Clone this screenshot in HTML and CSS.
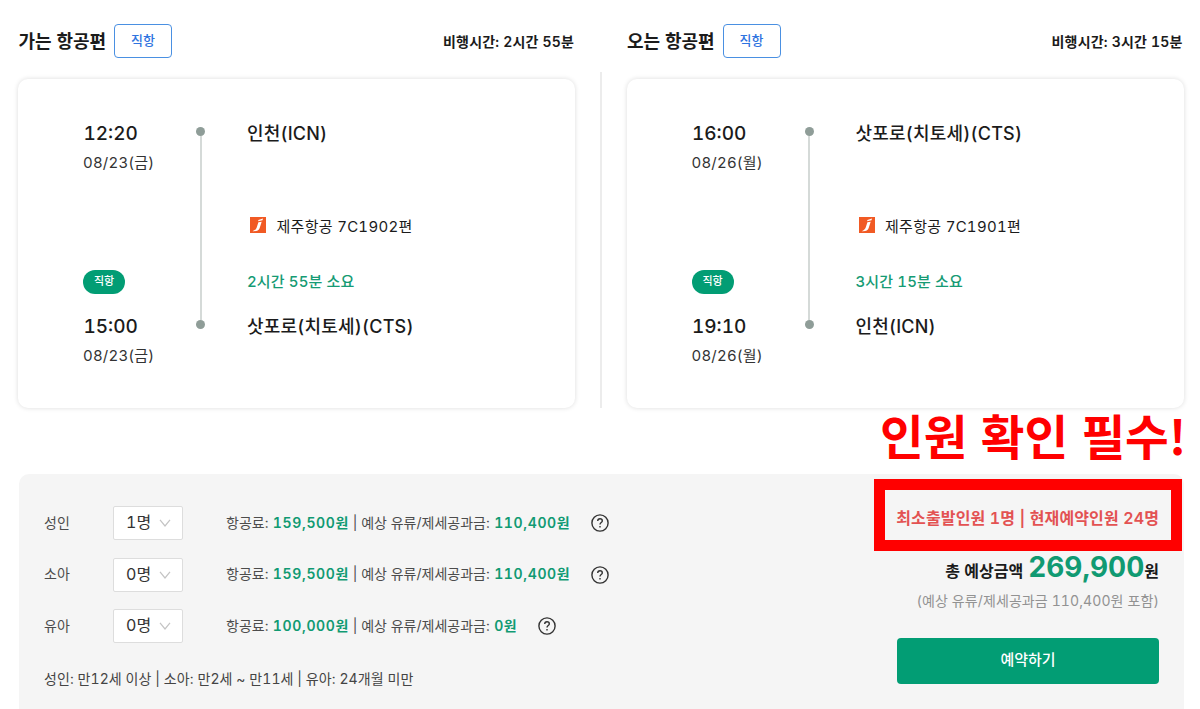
FILE: index.html
```
<!DOCTYPE html>
<html lang="ko">
<head>
<meta charset="utf-8">
<title>항공편 예약</title>
<link rel="stylesheet" href="styles.css">
</head>
<body>
<main class="page">
  <section class="flights">
    <article class="flight">
      <header class="flight-head">
        <h2 class="flight-title">가는 항공편</h2>
        <span class="tag">직항</span>
        <span class="duration">비행시간: 2시간 55분</span>
      </header>
      <div class="card">
        <div class="times">
          <div class="time">12:20</div>
          <div class="date">08/23(금)</div>
          <span class="pill">직항</span>
          <div class="time">15:00</div>
          <div class="date">08/23(금)</div>
        </div>
        <div class="track"><i class="dot"></i><i class="line"></i><i class="dot"></i></div>
        <div class="places">
          <div class="place">인천(ICN)</div>
          <div class="airline">
            <svg class="logo" viewBox="0 0 16 16"><rect width="16" height="16" fill="#f15a24"/><path d="M8.4 2.9 13 1.6 12.5 3.3 8.1 4.3ZM8.4 5.2 11.7 4.8 9.6 11.2C8.8 13.5 6.8 14.5 2.6 14.2 5 13.2 6.2 12.1 6.8 10.2Z" fill="#fff"/></svg>
            <span>제주항공 7C1902편</span>
          </div>
          <div class="elapsed">2시간 55분 소요</div>
          <div class="place">삿포로(치토세)(CTS)</div>
        </div>
      </div>
    </article>
    <div class="divider"></div>
    <article class="flight">
      <header class="flight-head">
        <h2 class="flight-title">오는 항공편</h2>
        <span class="tag">직항</span>
        <span class="duration">비행시간: 3시간 15분</span>
      </header>
      <div class="card">
        <div class="times">
          <div class="time">16:00</div>
          <div class="date">08/26(월)</div>
          <span class="pill">직항</span>
          <div class="time">19:10</div>
          <div class="date">08/26(월)</div>
        </div>
        <div class="track"><i class="dot"></i><i class="line"></i><i class="dot"></i></div>
        <div class="places">
          <div class="place">삿포로(치토세)(CTS)</div>
          <div class="airline">
            <svg class="logo" viewBox="0 0 16 16"><rect width="16" height="16" fill="#f15a24"/><path d="M8.4 2.9 13 1.6 12.5 3.3 8.1 4.3ZM8.4 5.2 11.7 4.8 9.6 11.2C8.8 13.5 6.8 14.5 2.6 14.2 5 13.2 6.2 12.1 6.8 10.2Z" fill="#fff"/></svg>
            <span>제주항공 7C1901편</span>
          </div>
          <div class="elapsed">3시간 15분 소요</div>
          <div class="place">인천(ICN)</div>
        </div>
      </div>
    </article>
  </section>

  <section class="booking">
    <div class="fares">
      <div class="fare">
        <span class="who">성인</span>
        <span class="select"><span class="count">1명</span><svg class="chev" viewBox="0 0 12 8"><path d="M1 .8 6 7 11 .8"/></svg></span>
        <span class="price">항공료: <b>159,500원</b> | 예상 유류/제세공과금: <b>110,400원</b></span>
        <svg class="help" viewBox="0 0 18 18"><circle cx="9" cy="9" r="8.1"/><path d="M6.7 7.1C6.7 5.6 7.7 4.8 9 4.8S11.3 5.6 11.3 6.9C11.3 8.5 9 8.7 9 10.5M9 12V13.5"/></svg>
      </div>
      <div class="fare">
        <span class="who">소아</span>
        <span class="select"><span class="count">0명</span><svg class="chev" viewBox="0 0 12 8"><path d="M1 .8 6 7 11 .8"/></svg></span>
        <span class="price">항공료: <b>159,500원</b> | 예상 유류/제세공과금: <b>110,400원</b></span>
        <svg class="help" viewBox="0 0 18 18"><circle cx="9" cy="9" r="8.1"/><path d="M6.7 7.1C6.7 5.6 7.7 4.8 9 4.8S11.3 5.6 11.3 6.9C11.3 8.5 9 8.7 9 10.5M9 12V13.5"/></svg>
      </div>
      <div class="fare">
        <span class="who">유아</span>
        <span class="select"><span class="count">0명</span><svg class="chev" viewBox="0 0 12 8"><path d="M1 .8 6 7 11 .8"/></svg></span>
        <span class="price">항공료: <b>100,000원</b> | 예상 유류/제세공과금: <b>0원</b></span>
        <svg class="help" viewBox="0 0 18 18"><circle cx="9" cy="9" r="8.1"/><path d="M6.7 7.1C6.7 5.6 7.7 4.8 9 4.8S11.3 5.6 11.3 6.9C11.3 8.5 9 8.7 9 10.5M9 12V13.5"/></svg>
      </div>
      <p class="ages">성인: 만12세 이상 | 소아: 만2세 ~ 만11세 | 유아: 24개월 미만</p>
    </div>
    <div class="summary">
      <div class="seats">최소출발인원 1명 | 현재예약인원 24명</div>
      <div class="total"><span>총 예상금액</span><strong>269,900</strong><span>원</span></div>
      <div class="included">(예상 유류/제세공과금 110,400원 포함)</div>
      <button class="book" type="button">예약하기</button>
    </div>
    <div class="callout-text">인원 확인 필수!</div>
    <div class="callout-box"></div>
  </section>
</main>
</body>
</html>
```
FILE: styles.css
```
* { box-sizing: border-box; }
body {
  margin: 0;
  background: #fff;
  color: #1b1b1b;
  font-family: Inter, "Noto Sans CJK KR", sans-serif;
  font-variant-numeric: tabular-nums;
  overflow: hidden;
}
.page { width: 1200px; height: 709px; overflow: hidden; white-space: nowrap; }
.flights { display: flex; padding: 24px 0 0 18px; height: 474px; }
.flight { width: 557px; }
.divider { width: 2px; height: 336px; margin: 48px 25px 0 24.5px; background: #ececec; }

.flight-head { display: flex; align-items: center; height: 34px; }
.flight-title { margin: 0; width: 96px; padding: 1px 0 0 0.5px; font-size: 18px; font-weight: 600; line-height: 33px; }
.tag {
  width: 58px; height: 34px; line-height: 31px; text-align: center;
  border: 1px solid #4a90e2; border-radius: 4px;
  color: #2f74e0; font-size: 13px; font-weight: 500;
}
.duration { margin-left: auto; padding-right: 1px; font-size: 14px; font-weight: 600; letter-spacing: 0.18px; }

.card {
  display: flex; height: 329px; margin-top: 21px; padding: 40px 0 0 65px;
  border-radius: 10px; box-shadow: 0 0 5px rgba(0, 0, 0, 0.14);
}
.times { width: 113px; }
.time { height: 29px; line-height: 29px; padding-left: 0.5px; font-size: 19px; font-weight: 500; }
.date { height: 29px; line-height: 29px; font-size: 15px; letter-spacing: 0.2px; color: #333; }
.pill {
  display: block; width: 42px; height: 24px; margin: 93px 0 18px;
  border-radius: 12px; background: #029d74; color: #fff;
  font-size: 11px; font-weight: 500; line-height: 22px; text-align: center;
}
.track { display: flex; flex-direction: column; align-items: center; width: 9px; height: 202px; margin-top: 8px; }
.dot { width: 9px; height: 9px; border-radius: 50%; background: #8f9d98; }
.line { flex: 1; width: 2px; background: #d5dad8; }
.places { margin-left: 42px; }
.place { height: 29px; line-height: 29px; font-size: 18px; font-weight: 500; letter-spacing: 0.2px; }
.airline { display: flex; align-items: center; height: 26px; margin: 64px 0 31px 3px; font-size: 15px; letter-spacing: 0.28px; }
.logo { width: 16px; height: 16px; margin-right: 10.5px; }
.elapsed { height: 26px; line-height: 26px; margin-bottom: 17px; color: #169b74; font-size: 15px; font-weight: 500; letter-spacing: 0.12px; }

.booking {
  position: relative; display: flex; justify-content: space-between;
  width: 1165px; height: 250px; margin-left: 19px; padding: 32px 25px 0 25px;
  border-radius: 10px; background: #f5f5f5;
}
.fare { display: flex; align-items: center; height: 34px; margin-bottom: 17.5px; font-size: 14px; color: #4c4c4c; }
.who, .price { line-height: 22px; padding-bottom: 1px; }
.who { width: 69px; }
.select {
  display: flex; align-items: center; width: 70px; height: 34px; padding-left: 12px; margin-right: 43px;
  border: 1px solid #ddd; border-radius: 2px; background: #fff; color: #333; font-size: 16px;
}
.count { width: 25px; line-height: 24px; padding-bottom: 2px; }
.chev { width: 12px; height: 8px; margin-left: 7.5px; fill: none; stroke: #c4c4c4; stroke-width: 1.2; }
.price b { margin-left: 0.7px; color: #109a72; font-weight: 600; letter-spacing: 0.65px; }
.help { width: 18px; height: 18px; margin-left: 20.5px; fill: none; stroke: #333; stroke-width: 1.4; }
.ages { margin: 0; padding-top: 7px; font-size: 14px; line-height: 22px; letter-spacing: 0.07px; color: #444; }

.summary { display: flex; flex-direction: column; align-items: flex-end; width: 262px; }
.seats { height: 24px; line-height: 24px; color: #e35252; font-size: 16px; font-weight: 600; letter-spacing: 0.12px; }
.total { display: flex; align-items: baseline; height: 40px; margin-top: 17px; line-height: 40px; font-size: 16px; font-weight: 600; }
.total strong { margin-left: 5px; color: #109a72; font-size: 28px; font-weight: 700; }
.included { height: 24px; margin-top: 2px; line-height: 24px; color: #929292; font-size: 14px; letter-spacing: 0.1px; }
.book {
  width: 262px; height: 46px; margin-top: 25px; padding: 0 0 5px; border: 0; border-radius: 4px;
  background: #029d74; color: #fff; font: 500 15px Inter, "Noto Sans CJK KR", sans-serif;
}
.callout-text {
  position: absolute; left: 861px; top: -71px;
  color: #f00; font: 700 47.5px/64px "Noto Sans CJK KR", sans-serif;
}
.callout-box { position: absolute; left: 855px; top: 5px; width: 308px; height: 72px; border: 11px solid #f00; }
```
